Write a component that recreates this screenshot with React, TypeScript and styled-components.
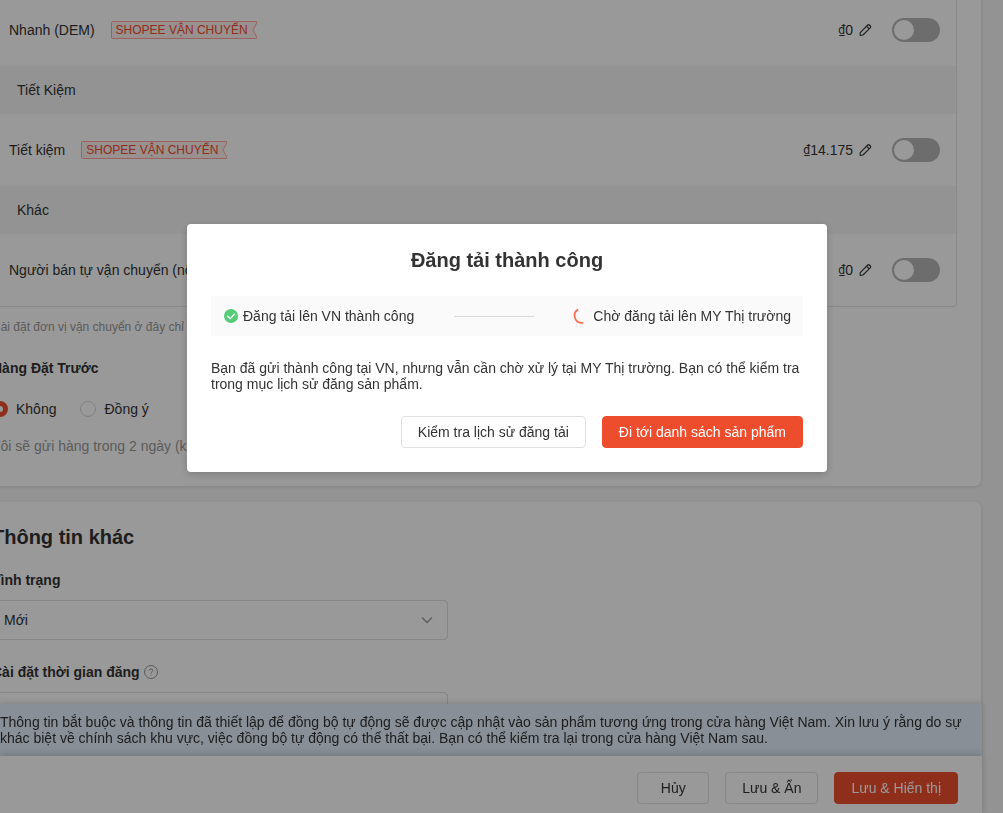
import React from "react";
import styled, { createGlobalStyle, css } from "styled-components";

const GlobalStyle = createGlobalStyle`
  *, *::before, *::after { box-sizing: border-box; }
  html, body { margin: 0; background: #f6f6f6; }
  body {
    height: 100vh;
    overflow: hidden;
    color: #333;
    font: 14px/16px "Liberation Sans", Arial, sans-serif;
  }
  h2, h3, p { margin: 0; }
`;

const Page = styled.main`
  display: flex;
  flex-direction: column;
  gap: 16px;
  height: 100vh;
  overflow: hidden;
  padding-right: 22px;
`;

const Card = styled.section<{ $continued?: boolean }>`
  flex: none;
  margin-left: -32px;
  padding: 24px 24px 32px;
  background: #fff;
  border-radius: 6px;
  box-shadow: 0 1px 4px rgba(0, 0, 0, 0.12);
  ${(p) => p.$continued && css`
    margin-top: -6px;
    padding-top: 0;
    border-radius: 0 0 6px 6px;
  `}
`;

const Channels = styled.div`
  border: 1px solid #e5e5e5;
  border-top: 0;
  border-radius: 0 0 4px 4px;
`;

const ChannelGroup = styled.div`
  height: 48px;
  padding: 16px 24px;
  background: #f6f6f6;
`;

const ChannelRow = styled.div`
  display: flex;
  align-items: center;
  height: 72px;
  padding: 0 16px;
  white-space: nowrap;
`;

const ChannelName = styled.span`
  flex: 1;
  display: flex;
  align-items: center;
  gap: 16px;
`;

const TagBox = styled.span`
  position: relative;
  width: 146px;
  height: 18px;
  padding-left: 5px;
  color: #ee4d2d;
  font-size: 12px;
  line-height: 18px;
`;

const TagShape = styled.svg`
  position: absolute;
  inset: 0;
`;

const TagText = styled.span`
  position: relative;
`;

const Price = styled.span`
  display: flex;
  align-items: center;
  margin-right: 20px;
`;

const Currency = styled.span`
  font-family: Roboto, sans-serif;
  font-size: 12px;
`;

const IconButton = styled.button`
  display: flex;
  margin-left: 6px;
  padding: 0;
  border: 0;
  background: none;
  color: #333;
`;

const Toggle = styled.input`
  appearance: none;
  display: flex;
  align-items: center;
  width: 48px;
  height: 24px;
  margin: 0;
  padding: 2px;
  border-radius: 12px;
  background: #b6b6b6;
  &::before {
    content: "";
    width: 20px;
    height: 20px;
    border-radius: 50%;
    background: #fff;
  }
`;

const Hint = styled.p<{ $small?: boolean }>`
  color: #999;
  white-space: nowrap;
  font-size: ${(p) => (p.$small ? 12 : 14)}px;
`;

const Block = styled.div<{ $gap: number }>`
  margin-top: ${(p) => p.$gap}px;
`;

const Label = styled.label`
  display: flex;
  align-items: center;
  gap: 4px;
  margin-bottom: 12px;
  font-weight: bold;
`;

const SubTitle = styled.h3`
  font-size: 14px;
  line-height: 16px;
`;

const Title = styled.h2<{ $center?: boolean }>`
  font-size: 20px;
  line-height: ${(p) => (p.$center ? 24 : 22)}px;
  text-align: ${(p) => (p.$center ? "center" : "left")};
`;

const RadioGroup = styled.div`
  display: flex;
  gap: 24px;
  margin: 25px 0 21px;
`;

const RadioLabel = styled.label`
  display: flex;
  align-items: center;
  gap: 8px;
`;

const Radio = styled.input`
  appearance: none;
  width: 16px;
  height: 16px;
  margin: 0;
  border: 1px solid #d8d8d8;
  border-radius: 50%;
  background: #fff;
  &:checked { border: 5px solid #ee4d2d; }
`;

const Field = styled.div`
  position: relative;
  width: 456px;
`;

const fieldBox = css`
  appearance: none;
  display: block;
  width: 100%;
  height: 40px;
  padding: 0 11px;
  border: 1px solid #e0e0e0;
  border-radius: 4px;
  background: #fff;
  color: #333;
  font: inherit;
`;

const Select = styled.select`${fieldBox}`;
const TextInput = styled.input`${fieldBox}`;

const Chevron = styled.svg`
  position: absolute;
  top: 13px;
  right: 14px;
  pointer-events: none;
`;

const BottomBar = styled.footer`
  position: fixed;
  left: 0;
  right: 21px;
  bottom: 0;
`;

const Notice = styled.p`
  padding: 10px 16px 10px 0;
  background: #e3eefb;
  box-shadow: 0 -1px 6px rgba(0, 0, 0, 0.16);
`;

const Actions = styled.div<{ $bar?: boolean }>`
  display: flex;
  justify-content: flex-end;
  gap: 16px;
  ${(p) => p.$bar && css`
    position: relative;
    padding: 16px 24px 9px;
    background: #fff;
    box-shadow: 0 -1px 8px rgba(0, 0, 0, 0.2);
  `}
`;

const Button = styled.button<{ $primary?: boolean }>`
  min-width: 72px;
  height: 32px;
  padding: 0 16px;
  border: 1px solid ${(p) => (p.$primary ? "#ee4d2d" : "#e0e0e0")};
  border-radius: 4px;
  background: ${(p) => (p.$primary ? "#ee4d2d" : "#fff")};
  color: ${(p) => (p.$primary ? "#fff" : "#333")};
  font: inherit;
  white-space: nowrap;
`;

const Overlay = styled.div`
  position: fixed;
  inset: 0;
  display: flex;
  align-items: flex-start;
  justify-content: center;
  padding: 224px 0 0 11px;
  background: rgba(0, 0, 0, 0.4);
`;

const Dialog = styled.div`
  display: flex;
  flex-direction: column;
  gap: 24px;
  width: 640px;
  max-width: 100%;
  padding: 24px;
  border-radius: 4px;
  background: #fff;
  box-shadow: 0 2px 8px rgba(0, 0, 0, 0.2);
`;

const Steps = styled.div`
  display: flex;
  align-items: center;
  justify-content: space-between;
  height: 40px;
  padding: 0 12px;
  background: #fafafa;
`;

const Step = styled.span`
  display: flex;
  align-items: center;
  gap: 4px;
`;

const StepLine = styled.span`
  width: 80px;
  height: 1px;
  background: #d8d8d8;
`;

const ShippingTag = () => (
  <TagBox>
    <TagShape width="146" height="18" viewBox="0 0 146 18" fill="none">
      <path d="M1.5 .5H145.5V2.5L142 9L145.5 15.5V17.5H1.5Q.5 17.5 .5 16.5V1.5Q.5 .5 1.5 .5Z" fill="#fff1f0" stroke="#ffa39e" />
    </TagShape>
    <TagText>SHOPEE VẬN CHUYỂN</TagText>
  </TagBox>
);

const Pencil = () => (
  <svg width="13" height="14" viewBox="0 0 13 14" fill="none" stroke="currentColor" strokeWidth="1.1" strokeLinejoin="round">
    <path d="M1.2 12.4V9.6L8.8 2Q9.6 1.2 10.4 2L11.4 3Q12.2 3.8 11.4 4.6L4 12Z" />
    <path d="M7.6 3.2L10.2 5.8" />
  </svg>
);

const Help = () => (
  <svg width="14" height="14" viewBox="0 0 14 14" fill="none" stroke="#999">
    <circle cx="7" cy="7" r="6.5" />
    <path d="M5.2 5.6Q5.2 3.9 7 3.9T8.8 5.5Q8.8 6.4 7.8 6.9Q7 7.3 7 8.4" />
    <path d="M7 9.4V10.5" />
  </svg>
);

interface ChannelProps {
  name: string;
  price: string;
  tagged?: boolean;
}

const Channel = ({ name, price, tagged }: ChannelProps) => (
  <ChannelRow>
    <ChannelName>
      {name}
      {tagged && <ShippingTag />}
    </ChannelName>
    <Price>
      <Currency>₫</Currency>{price}
      <IconButton type="button" aria-label={`Sửa ${name}`}><Pencil /></IconButton>
    </Price>
    <Toggle type="checkbox" role="switch" aria-label={name} />
  </ChannelRow>
);

export default function App() {
  return (
    <>
      <GlobalStyle />
      <Page>
        <Card $continued>
          <Channels>
            <Channel name="Nhanh (DEM)" price="0" tagged />
            <ChannelGroup>Tiết Kiệm</ChannelGroup>
            <Channel name="Tiết kiệm" price="14.175" tagged />
            <ChannelGroup>Khác</ChannelGroup>
            <Channel name="Người bán tự vận chuyển (nội" price="0" />
          </Channels>
          <Block $gap={12}>
            <Hint $small>Cài đặt đơn vị vận chuyển ở đây chỉ</Hint>
          </Block>
          <Block $gap={25}>
            <SubTitle>Hàng Đặt Trước</SubTitle>
            <RadioGroup>
              <RadioLabel><Radio type="radio" name="preorder" defaultChecked />Không</RadioLabel>
              <RadioLabel><Radio type="radio" name="preorder" />Đồng ý</RadioLabel>
            </RadioGroup>
            <Hint>Tôi sẽ gửi hàng trong 2 ngày (k</Hint>
          </Block>
        </Card>

        <Card>
          <Title>Thông tin khác</Title>
          <Block $gap={24}>
            <Label htmlFor="condition">Tình trạng</Label>
            <Field>
              <Select id="condition"><option>Mới</option></Select>
              <Chevron width="14" height="14" viewBox="0 0 14 14" fill="none" stroke="#999" strokeWidth="1.3">
                <path d="M2 4.5L7 9.5L12 4.5" />
              </Chevron>
            </Field>
          </Block>
          <Block $gap={24}>
            <Label htmlFor="schedule">Cài đặt thời gian đăng <Help /></Label>
            <Field><TextInput id="schedule" type="text" /></Field>
          </Block>
        </Card>
      </Page>

      <BottomBar>
        <Notice>
          Thông tin bắt buộc và thông tin đã thiết lập để đồng bộ tự động sẽ được cập nhật vào sản phẩm tương ứng trong cửa hàng Việt Nam. Xin lưu ý rằng do sự khác biệt về chính sách khu vực, việc đồng bộ tự động có thể thất bại. Bạn có thể kiểm tra lại trong cửa hàng Việt Nam sau.
        </Notice>
        <Actions $bar>
          <Button type="button">Hủy</Button>
          <Button type="button">Lưu &amp; Ẩn</Button>
          <Button type="button" $primary>Lưu &amp; Hiển thị</Button>
        </Actions>
      </BottomBar>

      <Overlay>
        <Dialog role="dialog" aria-modal="true" aria-labelledby="dialog-title">
          <Title id="dialog-title" $center>Đăng tải thành công</Title>
          <Steps>
            <Step>
              <svg width="16" height="16" viewBox="0 0 16 16" fill="none">
                <circle cx="8" cy="8" r="7" fill="#55cc77" />
                <path d="M4.2 7.8L7.2 10.6L11.8 5.8" stroke="#fff" strokeWidth="1.3" />
              </svg>
              Đăng tải lên VN thành công
            </Step>
            <StepLine />
            <Step>
              <svg width="16" height="16" viewBox="0 0 16 16" fill="none" stroke="#ff6a4d" strokeWidth="1.7" strokeLinecap="round">
                <path d="M4.6 1.8A7.2 7.2 0 0 0 9.6 14.8" />
              </svg>
              Chờ đăng tải lên MY Thị trường
            </Step>
          </Steps>
          <p>Bạn đã gửi thành công tại VN, nhưng vẫn cần chờ xử lý tại MY Thị trường. Bạn có thể kiểm tra trong mục lịch sử đăng sản phẩm.</p>
          <Actions>
            <Button type="button">Kiểm tra lịch sử đăng tải</Button>
            <Button type="button" $primary>Đi tới danh sách sản phẩm</Button>
          </Actions>
        </Dialog>
      </Overlay>
    </>
  );
}
